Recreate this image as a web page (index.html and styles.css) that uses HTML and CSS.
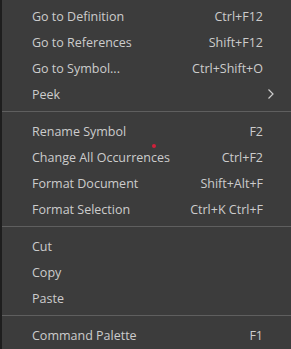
FILE: index.html
```html
<!DOCTYPE html>
<html lang="en">
<head>
  <meta charset="UTF-8" />
  <title>Context Menu</title>
  <link rel="stylesheet" href="styles.css">
</head>
<body>
  <div class="menu">
    <!-- Navigation -->
    <div class="item"><span class="label">Go to Definition</span><span class="keys">Ctrl+F12</span></div>
    <div class="item"><span class="label">Go to References</span><span class="keys">Shift+F12</span></div>
    <div class="item"><span class="label">Go to Symbol...</span><span class="keys">Ctrl+Shift+O</span></div>
    <div class="item">
      <span class="label">Peek</span>
      <svg class="arrow" width="8" height="12" viewBox="0 0 8 12">
        <path d="M1.5 1.5 L6 6 L1.5 10.5" fill="none" stroke="#cccccc" stroke-width="1.2"/>
      </svg>
    </div>
    <div class="sep"></div>

    <!-- Editing -->
    <div class="item"><span class="label">Rename Symbol</span><span class="keys">F2</span></div>
    <div class="item"><span class="label">Change All Occurrences</span><span class="keys">Ctrl+F2</span></div>
    <div class="item"><span class="label">Format Document</span><span class="keys">Shift+Alt+F</span></div>
    <div class="item"><span class="label">Format Selection</span><span class="keys">Ctrl+K Ctrl+F</span></div>
    <div class="sep"></div>

    <!-- Clipboard -->
    <div class="item"><span class="label">Cut</span></div>
    <div class="item"><span class="label">Copy</span></div>
    <div class="item"><span class="label">Paste</span></div>
    <div class="sep"></div>

    <div class="item"><span class="label">Command Palette</span><span class="keys">F1</span></div>

    <div class="dot"></div>
  </div>
</body>
</html>
```

FILE: styles.css
```css
body {
  margin: 0;
  background: #1e1e1e;
  font-family: "Open Sans", "Noto Sans", sans-serif;
  font-size: 12.5px;
  height: 349px;
  overflow: hidden;
}

.menu {
  position: relative;
  margin-left: 2px;
  height: 349px;
  background: #3c3c3c;
  padding-top: 3px;
  box-sizing: border-box;
  color: #cccccc;
}

.item {
  display: flex;
  align-items: center;
  justify-content: space-between;
  height: 26px;
  padding: 0 28px 0 30px;
}

.keys {
  color: #cccccc;
}

.arrow {
  margin-right: -12px;
}

.sep {
  height: 1px;
  background: #5f5f5f;
  margin: 4px 0 6px;
}

.dot {
  position: absolute;
  left: 150px;
  top: 144px;
  width: 4px;
  height: 4px;
  border-radius: 50%;
  background: #d0203a;
}
```
